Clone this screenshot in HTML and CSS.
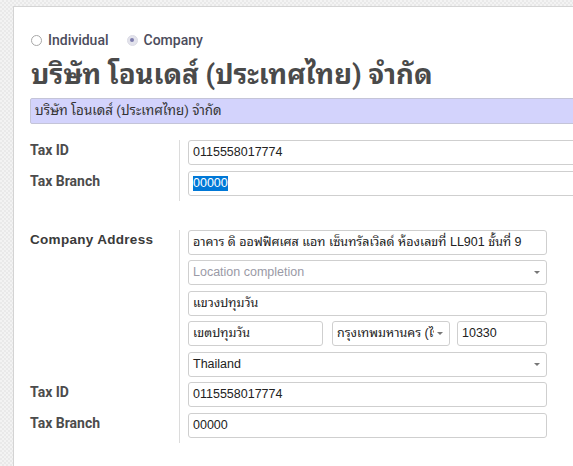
FILE: index.html
```html
<!DOCTYPE html>
<html lang="th">
<head>
<meta charset="utf-8">
<title>Company</title>
<link rel="stylesheet" href="styles.css">
</head>
<body>
<div class="sheet">
  <div class="type-row">
    <label class="radio"><span class="dot"></span><span class="radio-text">Individual</span></label>
    <label class="radio"><span class="dot checked"></span><span class="radio-text">Company</span></label>
  </div>
  <h1 class="name">บริษัท โอนเดส์ (ประเทศไทย) จำกัด</h1>
  <div class="name-bar">บริษัท โอนเดส์ (ประเทศไทย) จำกัด</div>

  <div class="group tax-group">
    <div class="label">Tax ID</div>
    <div class="cell"><div class="field">0115558017774</div></div>
    <div class="label">Tax Branch</div>
    <div class="cell last"><div class="field"><span class="sel">00000</span></div></div>
  </div>

  <div class="group addr-group">
    <div class="label addr-label">Company Address</div>
    <div class="cell"><div class="field">อาคาร ดิ ออฟฟิศเศส แอท เซ็นทรัลเวิลด์ ห้องเลขที่ LL901 ชั้นที่ 9</div></div>
    <div class="label"></div>
    <div class="cell"><div class="field select placeholder">Location completion<span class="caret"></span></div></div>
    <div class="label"></div>
    <div class="cell"><div class="field">แขวงปทุมวัน</div></div>
    <div class="label"></div>
    <div class="cell">
      <div class="row3">
        <div class="field f-district">เขตปทุมวัน</div>
        <div class="field select f-province"><span class="clip">กรุงเทพมหานคร (ไทย)</span><span class="caret"></span></div>
        <div class="field f-zip">10330</div>
      </div>
    </div>
    <div class="label"></div>
    <div class="cell"><div class="field select">Thailand<span class="caret"></span></div></div>
    <div class="label">Tax ID</div>
    <div class="cell"><div class="field">0115558017774</div></div>
    <div class="label">Tax Branch</div>
    <div class="cell last"><div class="field">00000</div></div>
  </div>
</div>
</body>
</html>
```

FILE: styles.css
```css
html, body {
  margin: 0;
  padding: 0;
  height: 100%;
  overflow: hidden;
}
body {
  background-color: #f3f3f3;
  background-image:
    linear-gradient(45deg, #e9e9e9 25%, transparent 25%, transparent 75%, #e9e9e9 75%),
    linear-gradient(45deg, #e9e9e9 25%, transparent 25%, transparent 75%, #e9e9e9 75%);
  background-size: 4px 4px;
  background-position: 0 0, 2px 2px;
  font-family: Roboto, "Noto Sans Thai Looped", Tahoma, Loma, Garuda, "Noto Sans Thai", sans-serif;
  color: #4c4c4c;
}
.sheet {
  margin: 6px 0 0 13px;
  width: 700px;
  height: 600px;
  background: #fff;
  border-top: 1px solid #d4d4d4;
  border-left: 1px solid #d4d4d4;
  padding: 25px 0 0 16px;
  box-sizing: border-box;
}
.type-row {
  display: flex;
  align-items: center;
  height: 16px;
  gap: 18px;
  margin-left: 1px;
}
.radio {
  display: flex;
  align-items: center;
  gap: 6px;
  font-size: 14px;
  font-weight: 500;
  color: #4c4c5c;
}
.dot {
  width: 11px;
  height: 11px;
  box-sizing: border-box;
  border: 1px solid #a8a8a8;
  border-radius: 50%;
  background: #fff;
  display: flex;
  align-items: center;
  justify-content: center;
}
.dot.checked {
  border-color: #dcdce6;
  background: #e3e3ec;
}
.dot.checked::after {
  content: "";
  width: 4px;
  height: 4px;
  border-radius: 50%;
  background: #7c7bad;
}
.name {
  margin: 10px 0 0 1px;
  font-size: 27.5px;
  line-height: 34px;
  font-weight: 700;
  color: #4a4a4a;
}
.name-bar {
  margin-top: 6px;
  height: 26px;
  box-sizing: border-box;
  background: #d3d3fc;
  border: 1px solid #c4c4d8;
  border-radius: 2px;
  padding-left: 4px;
  font-size: 13.4px;
  line-height: 24px;
  color: #333;
}
.group {
  display: grid;
  grid-template-columns: 149px auto;
  justify-content: start;
}
.tax-group {
  margin-top: 16px;
  grid-template-columns: 149px 420px;
}
.addr-group {
  margin-top: 29px;
  grid-template-columns: 149px 368px;
}
.label {
  font-size: 14px;
  font-weight: 700;
  padding-top: 1px;
  line-height: 18px;
  color: #4c4c4c;
}
.addr-label {
  font-family: "Liberation Sans", Arial, sans-serif;
  font-size: 13.5px;
  color: #3a3a3a;
  letter-spacing: 0.3px;
}
.cell {
  border-left: 1px solid #dcdcdc;
  padding: 0 0 5.5px 8px;
}
.cell.last {
  padding-bottom: 5px;
}
.field {
  position: relative;
  height: 25px;
  box-sizing: border-box;
  border: 1px solid #cfcfcf;
  border-radius: 3px;
  background: #fff;
  padding: 0 20px 0 4px;
  font-family: "Liberation Sans", Arial, "Noto Sans Thai Looped", Tahoma, Loma, Garuda, sans-serif;
  font-size: 12.5px;
  font-weight: 400;
  line-height: 23px;
  color: #222;
  white-space: nowrap;
  overflow: hidden;
}
.placeholder {
  color: #9a9aa6;
}
.sel {
  background: #0078d7;
  color: #fff;
  display: inline-block;
  line-height: 15px;
}
.caret {
  position: absolute;
  right: 6px;
  top: 10px;
  width: 0;
  height: 0;
  border-left: 3px solid transparent;
  border-right: 3px solid transparent;
  border-top: 3px solid #777;
}
.row3 {
  display: flex;
}
.f-district {
  width: 135px;
}
.f-province {
  width: 118px;
  margin-left: 9px;
  padding-right: 4px;
}
.f-province .clip {
  display: block;
  width: 97px;
  overflow: hidden;
}
.f-zip {
  width: 90px;
  margin-left: 7px;
}
```
